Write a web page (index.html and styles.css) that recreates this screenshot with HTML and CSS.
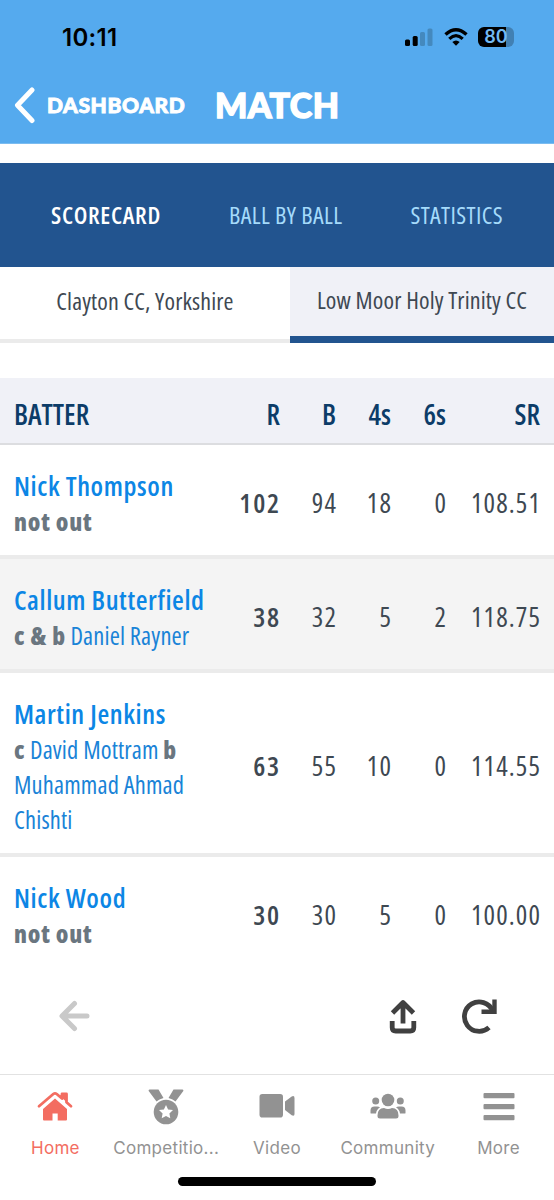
FILE: index.html
```html
<!DOCTYPE html>
<html lang="en">
<head>
  <meta charset="UTF-8" />
  <meta name="viewport" content="width=device-width, initial-scale=1" />
  <title>Match | Scorecard</title>
  <link rel="stylesheet" href="styles.css">
</head>
<body>

<header class="app-header">
  <div class="status-bar">
    <span class="time">10:11</span>
    <div class="status-icons">
      <svg class="signal" width="28" height="20" viewBox="0 0 28 20">
        <rect x="0" y="12.5" width="5" height="6.500" rx="1.5" />
        <rect x="7.700" y="9" width="5" height="10" rx="1.5" />
        <g fill="#4489be">
          <rect x="15" y="5" width="5" height="14" rx="1.5" />
          <rect x="22.500" y="1.5" width="5" height="17.500" rx="1.5" />
        </g>
      </svg>
      <svg class="wifi" width="24" height="20" viewBox="0 0 24 20">
        <path d="M1.5 7.6Q12-2.2 22.500 7.600" fill="none" stroke="#000" stroke-width="3.4" />
        <path d="M5.300 11.800Q12 5.400 18.700 11.800" fill="none" stroke="#000" stroke-width="3.2" />
        <path d="M8.300 15Q12 11.800 15.700 15L12 18.800Z" />
      </svg>
      <div class="battery"><span>80</span></div>
    </div>
  </div>
  <div class="title-bar">
    <a href="#" class="back">
      <svg width="22" height="38" viewBox="0 0 22 38">
        <path d="M19 4L4.500 19.300L19 34.500" fill="none" stroke="#fff" stroke-width="5" stroke-linecap="round" stroke-linejoin="round" />
      </svg>
      <span>DASHBOARD</span>
    </a>
    <h1>MATCH</h1>
  </div>
</header>

<nav class="match-nav">
  <a href="#" class="active">SCORECARD</a>
  <a href="#">BALL BY BALL</a>
  <a href="#">STATISTICS</a>
</nav>

<div class="team-tabs">
  <a href="#" class="team">Clayton CC, Yorkshire</a>
  <a href="#" class="team selected">Low Moor Holy Trinity CC</a>
</div>

<main>
  <table class="scorecard">
    <thead>
      <tr>
        <th class="batter">BATTER</th>
        <th class="runs">R</th>
        <th class="balls">B</th>
        <th class="fours">4s</th>
        <th class="sixes">6s</th>
        <th class="rate">SR</th>
      </tr>
    </thead>
    <tbody>
      <tr>
        <td><a href="#" class="name">Nick Thompson</a><p class="dismissal"><b>not out</b></p></td>
        <td class="runs">102</td>
        <td>94</td>
        <td>18</td>
        <td>0</td>
        <td>108.51</td>
      </tr>
      <tr class="shaded">
        <td><a href="#" class="name">Callum Butterfield</a><p class="dismissal"><b>c &amp; b</b> <a href="#">Daniel Rayner</a></p></td>
        <td class="runs">38</td>
        <td>32</td>
        <td>5</td>
        <td>2</td>
        <td>118.75</td>
      </tr>
      <tr>
        <td><a href="#" class="name">Martin Jenkins</a><p class="dismissal"><b>c</b> <a href="#">David Mottram</a> <b>b</b> <a href="#">Muhammad Ahmad Chishti</a></p></td>
        <td class="runs">63</td>
        <td>55</td>
        <td>10</td>
        <td>0</td>
        <td>114.55</td>
      </tr>
      <tr>
        <td><a href="#" class="name">Nick Wood</a><p class="dismissal"><b>not out</b></p></td>
        <td class="runs">30</td>
        <td>30</td>
        <td>5</td>
        <td>0</td>
        <td>100.00</td>
      </tr>
    </tbody>
  </table>
</main>

<div class="toolbar">
  <svg class="tool-back" width="32" height="32" viewBox="0 0 32 32">
    <path d="M16.500 3.500L4 16L16.500 28.500M4.500 16H29" fill="none" stroke="#c9c9c9" stroke-width="5" stroke-linecap="round" stroke-linejoin="round" />
  </svg>
  <svg class="tool-share" width="28" height="36" viewBox="0 0 28 36">
    <g fill="none" stroke="#404040" stroke-width="4.800" stroke-linejoin="round">
      <path d="M14 25.500V4.500M3.500 15L14 4.500L24.500 15" />
      <path d="M3.200 23V29.500Q3.200 33 6.700 33H21.300Q24.800 33 24.800 29.500V23" />
    </g>
  </svg>
  <svg class="tool-reload" width="36" height="36" viewBox="0 0 36 36">
    <path d="M31.500 12.500A14.700 14.700 0 1 0 28 29.500" fill="none" stroke="#404040" stroke-width="4.800" />
    <path d="M33.500 1.500V13.700H20.500" fill="none" stroke="#404040" stroke-width="4.400" />
  </svg>
</div>

<footer class="tab-bar">
  <a href="#" class="tab current">
    <svg width="36" height="36" viewBox="0 0 36 36">
      <path d="M2 17.200L16.300 5Q18 3.700 19.700 5L25 9.500V5H29.500V13.300L34 17.200" fill="none" stroke="currentColor" stroke-width="2.800" stroke-linecap="round" stroke-linejoin="round" />
      <path d="M25 4.500H29.500V13L25 9Z" />
      <path d="M18 9.500L30 20V30.500Q30 31.500 29 31.500H20.700V24.500H15.500V31.500H7Q6 31.500 6 30.500V20Z" />
    </svg>
    <span>Home</span>
  </a>
  <a href="#" class="tab">
    <svg width="36" height="36" viewBox="0 0 36 36">
      <path d="M1.500 0.500H10.500L15.500 9Q11 10 8.500 12.500L0.700 1.900Q0.200 0.800 1.500 0.500Z" />
      <path d="M34.500 0.500H25.500L20.500 9Q25 10 27.500 12.500L35.300 1.900Q35.800 0.800 34.500 0.500Z" />
      <circle cx="18" cy="23" r="12.300" />
      <path fill="#fff" d="M18 16L20.100 20.500L25 21.100L21.400 24.500L22.300 29.300L18 27L13.700 29.300L14.600 24.500L11 21.100L15.900 20.500Z" />
    </svg>
    <span>Competitio...</span>
  </a>
  <a href="#" class="tab">
    <svg width="36" height="36" viewBox="0 0 36 36">
      <rect x="0.500" y="5" width="23.500" height="23.500" rx="2.800" />
      <path d="M26 12.500L32.700 7.500Q35.500 6.200 35.500 9V25Q35.500 27.500 32.700 26.200L26 21Z" />
    </svg>
    <span>Video</span>
  </a>
  <a href="#" class="tab">
    <svg width="36" height="36" viewBox="0 0 36 36">
      <circle cx="18" cy="11" r="6.300" />
      <circle cx="5.700" cy="12" r="3.500" />
      <circle cx="30.300" cy="12" r="3.500" />
      <path d="M7.500 26.500Q7.500 19 14 19Q18 20.800 22 19Q28.500 19 28.500 26.500V27Q28.500 29.500 26 29.500H10Q7.500 29.500 7.500 27Z" />
      <path d="M0.500 24V21.500Q0.500 17.500 4.500 17.500H7Q9 17.500 10 18.500Q6.500 20.300 6 24.500H1.500Q0.500 24.500 0.500 24Z" />
      <path d="M35.500 24V21.500Q35.500 17.500 31.500 17.500H29Q27 17.500 26 18.500Q29.500 20.300 30 24.500H34.500Q35.500 24.500 35.500 24Z" />
    </svg>
    <span>Community</span>
  </a>
  <a href="#" class="tab">
    <svg width="36" height="36" viewBox="0 0 36 36">
      <rect x="2.500" y="4" width="31" height="5.200" rx="1" />
      <rect x="2.500" y="15" width="31" height="5.200" rx="1" />
      <rect x="2.500" y="26" width="31" height="5.200" rx="1" />
    </svg>
    <span>More</span>
  </a>
</footer>
<div class="home-indicator"></div>

</body>
</html>
```
FILE: styles.css
```css
* { margin: 0; padding: 0; box-sizing: border-box; }

body {
  width: 554px;
  height: 1200px;
  overflow: hidden;
  display: flex;
  flex-direction: column;
  background: white;
  color: #3e4852;
  font-family: "Open Sans", "Liberation Sans", sans-serif;
  font-stretch: 75%;
}

a { text-decoration: none; color: inherit; }

svg { display: block; flex: none; }

.app-header {
  height: 144px;
  flex: none;
  background: #55aaee;
  border-bottom: 1px solid #7bbcf0;
}

.status-bar {
  height: 74px;
  padding: 0 40px 0 62px;
  display: flex;
  align-items: center;
  justify-content: space-between;
}

.time {
  font: 600 24px Inter, sans-serif;
  letter-spacing: 0.3px;
  color: black;
}

.status-icons {
  display: flex;
  align-items: center;
  gap: 10px;
}

.signal { margin-right: 1px; }

.battery {
  width: 36px;
  height: 20px;
  border-radius: 6px;
  background: linear-gradient(to right, #000 28px, #4180b3 28px);
  color: #73b9f2;
  font: 600 18px/20px Inter, sans-serif;
  text-align: center;
}

.title-bar {
  height: 61px;
  padding-left: 13px;
  display: flex;
  align-items: center;
  color: white;
  font-family: Lato, sans-serif;
  font-weight: 900;
}

.back {
  display: flex;
  align-items: center;
  gap: 12px;
  width: 202px;
  font-size: 21px;
  letter-spacing: 0.6px;
  -webkit-text-stroke: 0.9px white;
}

.title-bar h1 {
  font-size: 34px;
  font-weight: 900;
  letter-spacing: 0.4px;
  -webkit-text-stroke: 1.4px white;
}

.match-nav {
  height: 104px;
  flex: none;
  margin-top: 19px;
  padding: 0 51px 2px;
  display: flex;
  align-items: center;
  justify-content: space-between;
  background: #22548f;
  color: #a5dbfb;
  font-size: 24px;
  letter-spacing: 0.4px;
}

.match-nav .active {
  color: white;
  font-weight: 600;
  letter-spacing: 0.7px;
}

.team-tabs {
  height: 76px;
  flex: none;
  display: flex;
  font-size: 24px;
  letter-spacing: 0.14px;
}

.team {
  width: 290px;
  padding-top: 17px;
  line-height: 34px;
  text-align: center;
  border-bottom: 4px solid #ebebeb;
}

.team.selected {
  width: 264px;
  padding-top: 16px;
  background: #f0f1f7;
  border-bottom: 7px solid #22548f;
}

main {
  flex: 1;
  min-height: 0;
  margin-top: 35px;
  overflow: hidden;
}

.scorecard {
  width: 554px;
  table-layout: fixed;
  border-collapse: separate;
  border-spacing: 0;
  font-size: 27px;
}

.scorecard th {
  height: 67px;
  padding: 7px 14px 0 0;
  text-align: right;
  font-size: 28px;
  line-height: 36px;
  font-weight: 600;
  color: #0c3c68;
  background: #f0f1f7;
  border-bottom: 2px solid #dcdde0;
}

.scorecard .batter { width: 221px; text-align: left; padding-left: 14px; }
th.runs { width: 73px; }
th.balls { width: 56px; }
th.fours, th.sixes { width: 55px; }
th.rate { width: 94px; }

.scorecard td {
  padding: 21px 13px 17px 0;
  text-align: right;
  letter-spacing: 1.1px;
  border-bottom: 4px solid #ebebeb;
  white-space: nowrap;
}

.scorecard td:first-child {
  padding: 22px 14px 16px;
  text-align: left;
  letter-spacing: 0;
  white-space: normal;
}

.scorecard .shaded { background: #f4f4f4; }
.scorecard tbody tr:last-child td { border-bottom: none; }

.scorecard td.runs { font-weight: 600; letter-spacing: 1.8px; }

.name {
  display: block;
  line-height: 37px;
  color: #0c86e5;
  font-weight: 600;
  letter-spacing: 0.6px;
}

.dismissal {
  font-size: 24.5px;
  line-height: 35px;
  color: #1983d7;
}

.dismissal a { letter-spacing: 0.15px; }

.dismissal b {
  color: #6a7680;
  font-weight: 800;
  letter-spacing: 0.8px;
}

.toolbar {
  height: 116px;
  flex: none;
  padding: 0 57px 0 58px;
  display: flex;
  align-items: center;
  background: white;
}

.tool-share { margin-left: auto; margin-right: 44px; }

.tab-bar {
  height: 103px;
  flex: none;
  display: flex;
  border-top: 1px solid #e2e2e2;
}

.tab {
  width: 110.8px;
  padding-top: 14px;
  display: flex;
  flex-direction: column;
  align-items: center;
  gap: 12px;
  color: #929292;
  fill: currentColor;
  font: 400 17px/22px Inter, sans-serif;
  letter-spacing: 0.3px;
}

.tab.current { color: #f36d61; }

.home-indicator {
  width: 198px;
  height: 9px;
  flex: none;
  margin: 0 auto 14px;
  border-radius: 5px;
  background: black;
}
```
